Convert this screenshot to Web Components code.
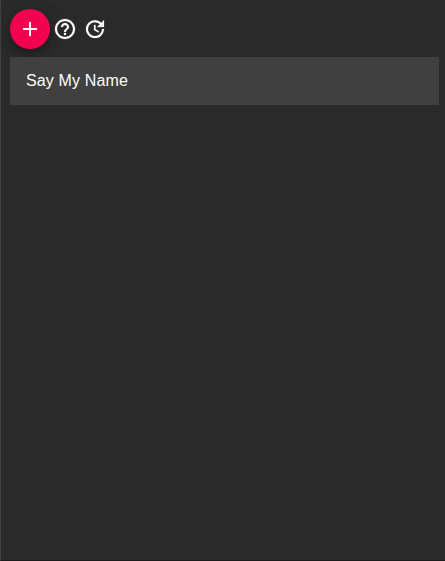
<!DOCTYPE html>
<html lang="en"><head><meta charset="utf-8"><title>Names</title>
<style>
html,body{height:100%}
body{margin:0;background:#2a2a2a;overflow:hidden;font-family:"Liberation Sans",Arial,sans-serif;color:#fff}
</style></head><body><name-app></name-app>
<script>
const define=(name,html)=>customElements.define(name,class extends HTMLElement{
  constructor(){super();this.attachShadow({mode:'open'}).innerHTML=html;}
});
define('add-button',`<style>:host{display:block}button{display:grid;place-items:center;width:40px;height:40px;padding:0;border:0;border-radius:50%;background:#f50050;color:#fff;box-shadow:0 3px 5px -1px rgba(0,0,0,.2),0 6px 10px rgba(0,0,0,.14),0 1px 18px rgba(0,0,0,.12)}</style><button aria-label="Add"><slot></slot></button>`);
define('icon-button',`<style>:host{display:grid;place-items:center;width:30px;height:40px}</style><slot></slot>`);
define('name-item',`<style>:host{display:flex;align-items:center;height:48px;padding:0 16px;box-sizing:border-box;background:#404040;font-size:16px;line-height:24px;letter-spacing:.15px}</style><slot></slot>`);
define('name-app',`<style>:host{display:flex;flex-direction:column;gap:8px;box-sizing:border-box;height:100vh;padding:9px 6px 0 9px;border-left:1px solid #414141;border-bottom:1px solid #1c1c1c}header{display:flex}svg{display:block;width:24px;height:24px;fill:currentColor}icon-button svg{stroke:currentColor;stroke-width:.2}</style>
<header><add-button><svg viewBox="0 0 24 24"><path d="M19 13h-6v6h-2v-6H5v-2h6V5h2v6h6v2z"/></svg></add-button>
<icon-button><svg viewBox="0 0 24 24"><path d="M11 18h2v-2h-2v2zm1-16C6.480 2 2 6.480 2 12s4.480 10 10 10 10-4.480 10-10S17.520 2 12 2zm0 18c-4.410 0-8-3.590-8-8s3.590-8 8-8 8 3.590 8 8-3.590 8-8 8zm0-14c-2.210 0-4 1.790-4 4h2c0-1.100.9-2 2-2s2 .9 2 2c0 2-3 1.750-3 5h2c0-2.250 3-2.500 3-5 0-2.210-1.790-4-4-4z"/></svg></icon-button>
<icon-button><svg viewBox="0 0 24 24"><path d="M21 10.120h-6.780l2.740-2.820c-2.730-2.700-7.150-2.800-9.880-.1-2.730 2.710-2.730 7.080 0 9.790s7.150 2.710 9.880 0C18.320 15.650 19 14.080 19 12.100h2c0 1.980-.88 4.550-2.640 6.290-3.510 3.480-9.210 3.480-12.720 0-3.500-3.470-3.530-9.110-.02-12.580s9.140-3.470 12.650 0L21 3v7.120zM12.500 8v4.250l3.500 2.080-.72 1.210L11 13V8h1.500z"/></svg></icon-button></header>
<name-item>Say My Name</name-item>`);
</script></body></html>
